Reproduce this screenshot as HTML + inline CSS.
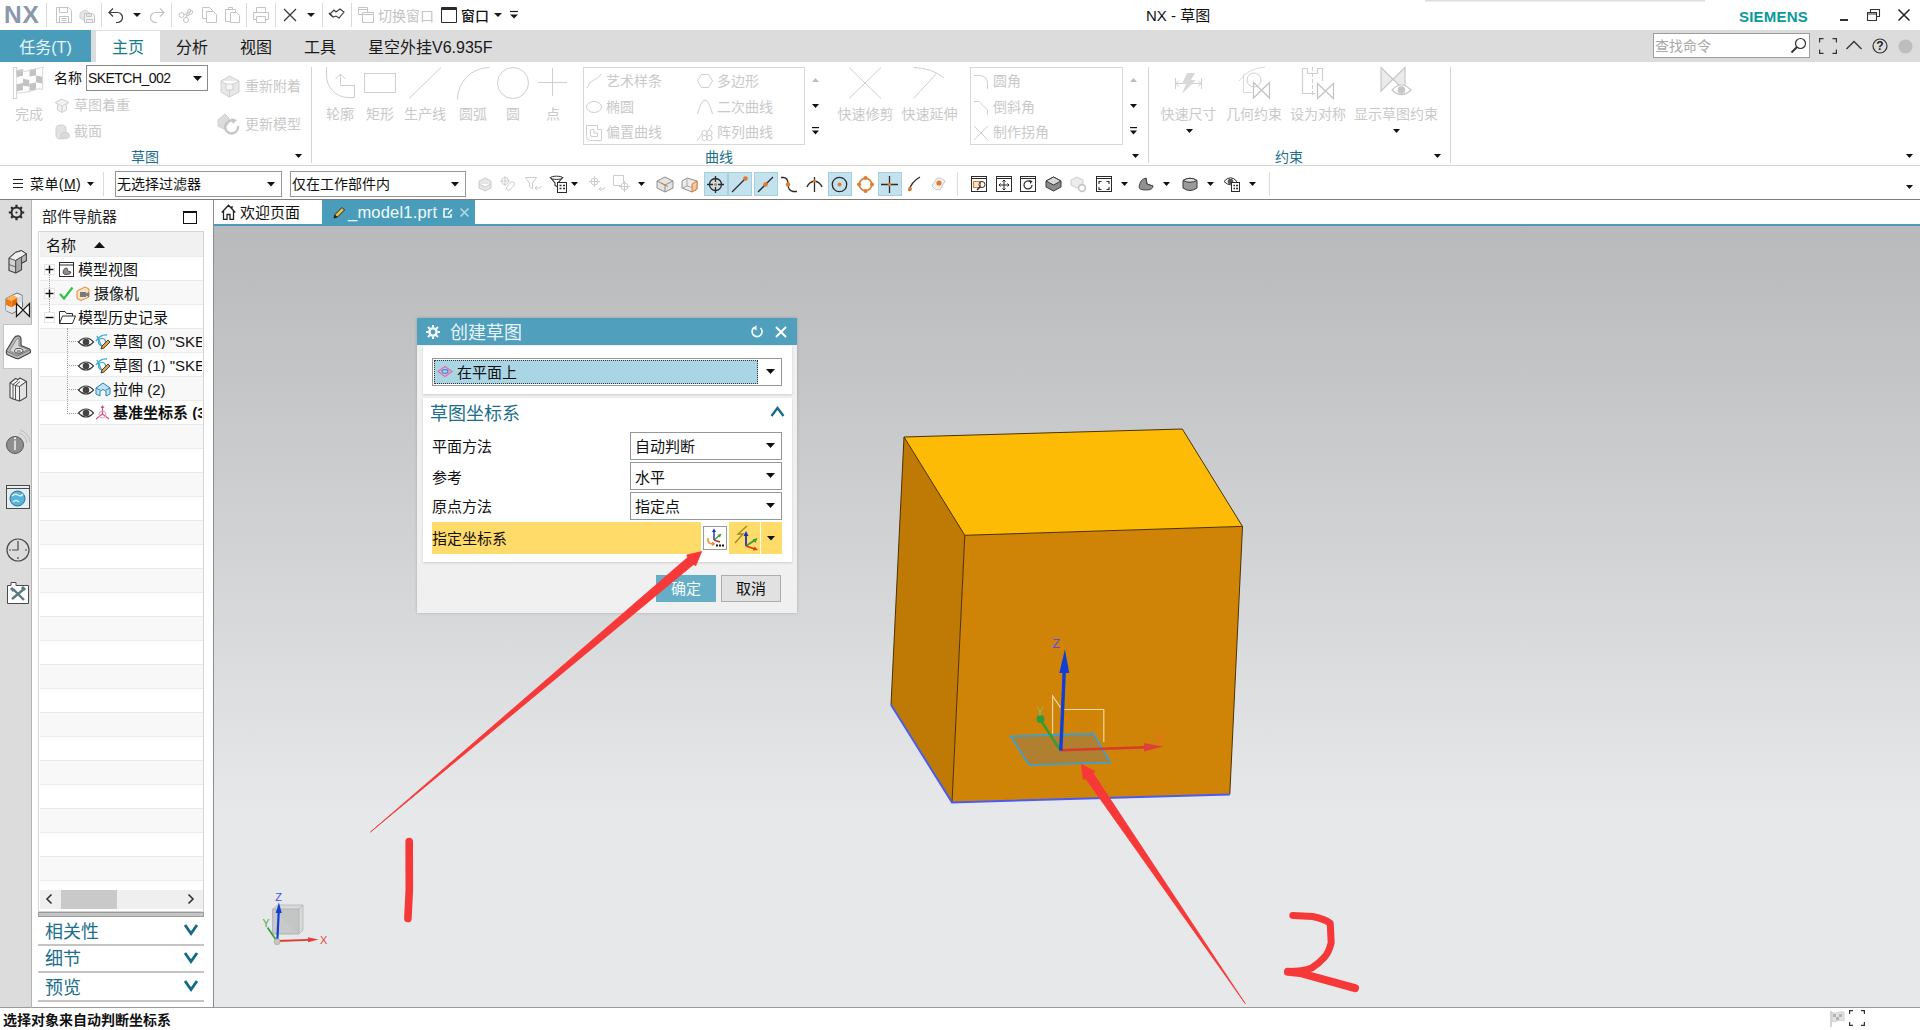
<!DOCTYPE html>
<html lang="zh-CN">
<head>
<meta charset="utf-8">
<title>NX - 草图</title>
<style>
*{box-sizing:border-box;margin:0;padding:0}
html,body{width:1920px;height:1030px;overflow:hidden;background:#fff}
body{font-family:"Liberation Sans","Noto Sans CJK SC",sans-serif;font-size:14px;color:#1a1a1a;position:relative}
.a{position:absolute}
.t{position:absolute;white-space:nowrap;line-height:1}
.dis{color:#c9c9c9}
svg{position:absolute;overflow:visible}
#titlebar{left:0;top:0;width:1920px;height:30px;background:#fff}
#tabbar{left:0;top:30px;width:1920px;height:32px;background:#dcdcdc}
#ribbon{left:0;top:62px;width:1920px;height:104px;background:#fff;border-bottom:1px solid #d4d4d4}
#toolbar{left:0;top:167px;width:1920px;height:33px;background:#fff;border-bottom:1px solid #7d7d7d}
#resbar{left:0;top:200px;width:32px;height:808px;background:#dcdcdc}
#nav{left:32px;top:200px;width:181px;height:808px;background:#fff}
#view{left:214px;top:226px;width:1706px;height:781px;background:linear-gradient(#b8b9bb 0%,#e7e8ea 75%,#e7e8ea 100%)}
#status{left:0;top:1007px;width:1920px;height:23px;background:#fff;border-top:1px solid #9a9a9a}
</style>
</head>
<body>
<div class="a" id="titlebar"></div>
<div class="a" id="tabbar"></div>
<div class="a" id="ribbon"></div>
<div class="a" id="toolbar"></div>
<div class="a" id="resbar"></div>
<div class="a" id="nav"></div>
<div class="a" id="view"></div>
<div class="a" id="status"></div>
<div class="t" style="left:4px;top:3.2px;font-size:24.5px;color:#8a98ad;font-weight:700;letter-spacing:0.8px">NX</div>
<div class="a" style="left:46px;top:3px;width:1px;height:24px;background:#d9d9d9"></div>
<div class="a" style="left:101px;top:3px;width:1px;height:24px;background:#d9d9d9"></div>
<div class="a" style="left:171px;top:3px;width:1px;height:24px;background:#d9d9d9"></div>
<div class="a" style="left:246px;top:3px;width:1px;height:24px;background:#d9d9d9"></div>
<div class="a" style="left:275px;top:3px;width:1px;height:24px;background:#d9d9d9"></div>
<div class="a" style="left:322px;top:3px;width:1px;height:24px;background:#d9d9d9"></div>
<div class="a" style="left:351px;top:3px;width:1px;height:24px;background:#d9d9d9"></div>
<svg style="left:56px;top:7px" width="16" height="16" viewBox="0 0 16 16"><path d="M.5 .5H12.5L15.5 3.5V15.5H.5Z M3.5 .5V5.5H11.5V.5 M3.5 15.5V9.5H12.5V15.5 M5.5 11.5H10.5 M5.5 13.5H10.5" fill="none" stroke="#c4c4c4" stroke-width="1"/></svg>
<svg style="left:79px;top:7px" width="16" height="16" viewBox="0 0 16 16"><path d="M1 6L6 3L11 6V11L6 14L1 11Z" fill="#e4e4e4" stroke="#d0d0d0"/><path d="M5.5 6.5H13.5L15.5 8.5V15.5H5.5Z M7.5 6.5V9.5H12.5V6.5 M7.5 15.5V12.5H13.5V15.5" fill="#f4f4f4" stroke="#c4c4c4"/></svg>
<svg style="left:108px;top:7px" width="17" height="16" viewBox="0 0 17 16"><path d="M1 5.5H9.5A5 5 0 0 1 9.5 15.5H8 M5 1.5L1 5.5L5 9.5" fill="none" stroke="#3a3a3a" stroke-width="1.2"/></svg>
<svg style="left:132.5px;top:13.0px" width="8" height="4" viewBox="0 0 8 4"><path d="M0 0H8L4.0 4Z" fill="#1a1a1a"/></svg>
<svg style="left:148px;top:7px" width="17" height="16" viewBox="0 0 17 16"><path d="M16 5.5H7.5A5 5 0 0 0 7.5 15.5H9 M12 1.5L16 5.5L12 9.5" fill="none" stroke="#c4c4c4" stroke-width="1.2"/></svg>
<svg style="left:178px;top:7px" width="16" height="16" viewBox="0 0 16 16"><circle cx="3.5" cy="8" r="2.5" fill="none" stroke="#c4c4c4"/><circle cx="8" cy="13" r="2.5" fill="none" stroke="#c4c4c4"/><path d="M6 8L14 3.5Q15.5 5 14 6.5L9 9 M8 10.5L10 3Q12 1.5 13 3L10 9" fill="none" stroke="#c4c4c4"/></svg>
<svg style="left:201px;top:7px" width="16" height="16" viewBox="0 0 16 16"><path d="M1.5 .5H8.5L11.5 3.5V11.5H1.5Z" fill="#fff" stroke="#c4c4c4"/><path d="M5.5 4.5H12.5L15.5 7.5V15.5H5.5Z" fill="#fff" stroke="#c4c4c4"/></svg>
<svg style="left:224px;top:7px" width="16" height="16" viewBox="0 0 16 16"><path d="M1.5 2.5H11.5V14.5H1.5Z M4.5 2.5V.5H8.5V2.5" fill="#fff" stroke="#c4c4c4"/><path d="M6.5 5.5H12.5L15.5 8.5V15.5H6.5Z" fill="#fff" stroke="#c4c4c4"/></svg>
<svg style="left:253px;top:7px" width="16" height="16" viewBox="0 0 16 16"><path d="M3.5 5.5V.5H12.5V5.5 M3.5 12.5H.5V5.5H15.5V12.5H12.5 M3.5 9.5H12.5V15.5H3.5Z" fill="none" stroke="#c4c4c4"/></svg>
<svg style="left:283px;top:8px" width="14" height="14" viewBox="0 0 14 14"><path d="M1 1L13 13M13 1L1 13" stroke="#3a3a3a" stroke-width="1.3" fill="none"/></svg>
<svg style="left:306.5px;top:13.0px" width="8" height="4" viewBox="0 0 8 4"><path d="M0 0H8L4.0 4Z" fill="#1a1a1a"/></svg>
<svg style="left:328px;top:8px" width="18" height="13" viewBox="0 0 18 13"><path d="M2 6L6 2L8 4L12 1L16 4L11 10L8 8L5 9Z" fill="#fff" stroke="#3a3a3a" stroke-width="1.1"/><path d="M1 5L4 8" stroke="#3a3a3a" stroke-width="1.5"/></svg>
<svg style="left:358px;top:7px" width="16" height="16" viewBox="0 0 16 16"><path d="M.5 .5H9.5V7.5H.5Z M.5 2.5H9.5" fill="#fff" stroke="#c4c4c4"/><path d="M4.5 5.5H15.5V15.5H4.5Z M4.5 7.5H15.5" fill="#fff" stroke="#c4c4c4"/></svg>
<div class="t" style="left:378px;top:8.5px;font-size:14px;color:#c4c4c4;font-weight:400;">切换窗口</div>
<svg style="left:441px;top:7px" width="16" height="16" viewBox="0 0 16 16"><path d="M.5 .5H15.5V15.5H.5Z" fill="#fff" stroke="#2a2a2a"/><path d="M.5 2H15.5" stroke="#2a2a2a" stroke-width="2"/></svg>
<div class="t" style="left:461px;top:8.5px;font-size:14px;color:#111;font-weight:500;">窗口</div>
<svg style="left:493.5px;top:13.0px" width="8" height="4" viewBox="0 0 8 4"><path d="M0 0H8L4.0 4Z" fill="#1a1a1a"/></svg>
<svg style="left:510px;top:11px" width="8" height="8" viewBox="0 0 8 8"><path d="M0 .5H8" stroke="#1a1a1a" stroke-width="1.2"/><path d="M0 3.5H8L4 7.5Z" fill="#1a1a1a"/></svg>
<div class="t" style="left:1146px;top:8.0px;font-size:15px;color:#111;font-weight:400;">NX - 草图</div>
<div class="t" style="left:1739px;top:9.0px;font-size:15px;color:#0a9a9a;font-weight:700;letter-spacing:0.2px">SIEMENS</div>
<div class="a" style="left:1840px;top:19px;width:8px;height:2px;background:#333"></div>
<svg style="left:1867px;top:9px" width="13" height="12" viewBox="0 0 13 12"><path d="M3.5 3.5V.5H12.5V7.5H9.5 M.5 3.5H9.5V11.5H.5Z M.5 5H9.5" fill="none" stroke="#333" stroke-width="1.1"/></svg>
<svg style="left:1898px;top:9px" width="12" height="12" viewBox="0 0 12 12"><path d="M.5 .5L11.5 11.5M11.5 .5L.5 11.5" stroke="#222" stroke-width="1.5"/></svg>
<div class="a" style="left:1425px;top:0px;width:280px;height:2px;background:linear-gradient(#d8d8d8,#f4f4f4)"></div>
<div class="a" style="left:0px;top:30px;width:91px;height:32px;background:#4a9dba"></div>
<div class="a" style="left:96px;top:31px;width:64px;height:31px;background:#fff"></div>
<div class="t" style="left:-154.5px;width:400px;text-align:center;top:39.7px;font-size:16px;color:#e9f6fb;font-weight:400;">任务(T)</div>
<div class="t" style="left:-72px;width:400px;text-align:center;top:39.7px;font-size:16px;color:#167a8c;font-weight:400;">主页</div>
<div class="t" style="left:-8px;width:400px;text-align:center;top:39.7px;font-size:16px;color:#1a1a1a;font-weight:400;">分析</div>
<div class="t" style="left:56px;width:400px;text-align:center;top:39.7px;font-size:16px;color:#1a1a1a;font-weight:400;">视图</div>
<div class="t" style="left:120px;width:400px;text-align:center;top:39.7px;font-size:16px;color:#1a1a1a;font-weight:400;">工具</div>
<div class="t" style="left:368px;top:39.7px;font-size:16px;color:#1a1a1a;font-weight:400;">星空外挂V6.935F</div>
<div class="a" style="left:1653px;top:33px;width:157px;height:25px;background:#fff;border:1px solid #9c9c9c"></div>
<div class="t" style="left:1655px;top:39.0px;font-size:14px;color:#a8a8a8;font-weight:400;">查找命令</div>
<svg style="left:1790px;top:37px" width="17" height="17" viewBox="0 0 17 17"><circle cx="10.5" cy="6.5" r="5" fill="none" stroke="#333" stroke-width="1.2"/><path d="M7 10L1.5 15.5" stroke="#333" stroke-width="2"/></svg>
<svg style="left:1819px;top:38px" width="18" height="16" viewBox="0 0 18 16"><path d="M.6 4.5V.6H4.5 M13.5 .6H17.4V4.5 M17.4 11.5V15.4H13.5 M4.5 15.4H.6V11.5" fill="none" stroke="#333" stroke-width="1.2"/></svg>
<svg style="left:1846px;top:40px" width="16" height="10" viewBox="0 0 16 10"><path d="M.5 9L8 1.5L15.5 9" fill="none" stroke="#333" stroke-width="1.3"/></svg>
<svg style="left:1872px;top:38px" width="16" height="16" viewBox="0 0 16 16"><circle cx="8" cy="8" r="7" fill="none" stroke="#333" stroke-width="1.2"/></svg><div class="t" style="left:1680px;width:400px;text-align:center;top:40.3px;font-size:12px;color:#222;font-weight:700;">?</div>
<svg style="left:1898px;top:39px" width="15" height="15" viewBox="0 0 15 15"><circle cx="7.5" cy="7.5" r="7" fill="#bdbdbd"/></svg>
<svg style="left:12px;top:65.5px" width="32" height="34" viewBox="0 0 32 34"><rect x="1.4" y="1.5" width="3.300" height="31" fill="#fff" stroke="#cdcdcd" stroke-width=".9"/><path d="M4.7 4.3L11.2 3.1V10.1L4.7 11.3Z" fill="#c3c3c3"/><path d="M4.7 11.3L11.2 10.1V17.1L4.7 18.3Z" fill="#fdfdfd"/><path d="M4.7 18.3L11.2 17.1V24.1L4.7 25.3Z" fill="#c3c3c3"/><path d="M11 5.8L17.5 7.0V14.0L11 12.8Z" fill="#fdfdfd"/><path d="M11 12.8L17.5 14.0V21.0L11 19.8Z" fill="#c3c3c3"/><path d="M11 19.8L17.5 21.0V28.0L11 26.8Z" fill="#fdfdfd"/><path d="M17.5 3.8L24.0 2.6V9.6L17.5 10.8Z" fill="#c3c3c3"/><path d="M17.5 10.8L24.0 9.6V16.6L17.5 17.8Z" fill="#fdfdfd"/><path d="M17.5 17.8L24.0 16.6V23.6L17.5 24.8Z" fill="#c3c3c3"/><path d="M24 2.6L30.5 3.8V10.8L24 9.6Z" fill="#fdfdfd"/><path d="M24 9.6L30.5 10.8V17.8L24 16.6Z" fill="#c3c3c3"/><path d="M24 16.6L30.5 17.8V24.8L24 23.6Z" fill="#fdfdfd"/><path d="M4.700 4.300Q9 5.500 11.500 5.500T24 2.800T30.700 2.200V23.500Q27 22 24 23.500T11.500 26.500T4.700 25.300" fill="none" stroke="#d2d2d2" stroke-width=".9"/></svg>
<div class="t" style="left:-171px;width:400px;text-align:center;top:106.7px;font-size:14px;color:#c9c9c9;font-weight:400;">完成</div>
<div class="t" style="left:54px;top:70.7px;font-size:14px;color:#111;font-weight:400;">名称</div>
<div class="a" style="left:86px;top:65px;width:122px;height:26px;background:#fff;border:1px solid #8a8a8a"></div>
<div class="t" style="left:88px;top:70.7px;font-size:14px;color:#111;font-weight:400;letter-spacing:-0.55px">SKETCH_002</div>
<svg style="left:192.5px;top:75.5px" width="9" height="5" viewBox="0 0 9 5"><path d="M0 0H9L4.5 5Z" fill="#111"/></svg>
<svg style="left:54px;top:98px" width="16" height="15" viewBox="0 0 16 15"><path d="M8 1L15 4.5L8 8L1 4.5Z M3.5 6.5V12L8 14.5L12.5 12V6.5 M8 8V14" fill="#f1f1f1" stroke="#cfcfcf"/></svg>
<div class="t" style="left:74px;top:97.7px;font-size:14px;color:#c9c9c9;font-weight:400;">草图着重</div>
<svg style="left:54px;top:124px" width="16" height="16" viewBox="0 0 16 16"><path d="M2 5Q2 1 7 1T12 5V11Q12 15 7 15T2 11Z" fill="#e2e2e2" stroke="#cfcfcf"/><ellipse cx="11" cy="11.5" rx="4.5" ry="3" fill="#dadada" stroke="#cfcfcf"/></svg>
<div class="t" style="left:74px;top:124.2px;font-size:14px;color:#c9c9c9;font-weight:400;">截面</div>
<svg style="left:218px;top:75px" width="23" height="24" viewBox="0 0 23 24"><path d="M11.5 1L21 6V17L11.5 22L3 17V6Z M3 6L11.5 11L21 6 M11.5 11V22" fill="#e8e8e8" stroke="#cfcfcf"/><path d="M8 9V15H15V9Z" fill="#f6f6f6" stroke="#cfcfcf"/></svg>
<div class="t" style="left:245px;top:79.2px;font-size:14px;color:#c9c9c9;font-weight:400;">重新附着</div>
<svg style="left:216px;top:112px" width="25" height="24" viewBox="0 0 25 24"><path d="M2 8L9 2L13 6V11L8 17L2 14Z" fill="#dcdcdc" stroke="#cfcfcf"/><path d="M22 14A6.5 6.5 0 1 1 18 9" fill="none" stroke="#c6c6c6" stroke-width="2.4"/><path d="M15 6L21 8L17 12Z" fill="#c6c6c6"/></svg>
<div class="t" style="left:245px;top:116.7px;font-size:14px;color:#c9c9c9;font-weight:400;">更新模型</div>
<div class="t" style="left:-55px;width:400px;text-align:center;top:149.7px;font-size:14px;color:#1b6f8c;font-weight:400;">草图</div>
<svg style="left:295.0px;top:154.0px" width="7" height="4" viewBox="0 0 7 4"><path d="M0 0H7L3.5 4Z" fill="#111"/></svg>
<div class="a" style="left:311px;top:67px;width:1px;height:96px;background:#d4d4d4"></div>
<svg style="left:326px;top:67px" width="29" height="32" viewBox="0 0 29 32"><path d="M.5 0V8A22 22 0 0 0 22 30.5H28.5V18.5H14.5V7.5 M9.5 12L14.5 7L19.5 12" fill="none" stroke="#cfcfcf"/></svg>
<div class="t" style="left:140px;width:400px;text-align:center;top:106.7px;font-size:14px;color:#c9c9c9;font-weight:400;">轮廓</div>
<div class="a" style="left:364px;top:73px;width:32px;height:20px;border:1px solid #cfcfcf"></div>
<div class="t" style="left:180px;width:400px;text-align:center;top:106.7px;font-size:14px;color:#c9c9c9;font-weight:400;">矩形</div>
<svg style="left:408px;top:66px" width="34" height="34" viewBox="0 0 34 34"><path d="M1 32.5L33 1.5" stroke="#cfcfcf" fill="none"/></svg>
<div class="t" style="left:225px;width:400px;text-align:center;top:106.7px;font-size:14px;color:#c9c9c9;font-weight:400;">生产线</div>
<svg style="left:457px;top:67px" width="33" height="33" viewBox="0 0 33 33"><path d="M.5 32.5A32 32 0 0 1 32.5 .5" stroke="#cfcfcf" fill="none"/></svg>
<div class="t" style="left:273px;width:400px;text-align:center;top:106.7px;font-size:14px;color:#c9c9c9;font-weight:400;">圆弧</div>
<svg style="left:497px;top:67px" width="32" height="32" viewBox="0 0 32 32"><circle cx="16" cy="16" r="15.5" stroke="#cfcfcf" fill="none"/></svg>
<div class="t" style="left:313px;width:400px;text-align:center;top:106.7px;font-size:14px;color:#c9c9c9;font-weight:400;">圆</div>
<svg style="left:538px;top:68px" width="29" height="29" viewBox="0 0 29 29"><path d="M0 14.5H29 M14.5 0V28" stroke="#cfcfcf" fill="none"/></svg>
<div class="t" style="left:353px;width:400px;text-align:center;top:106.7px;font-size:14px;color:#c9c9c9;font-weight:400;">点</div>
<div class="a" style="left:583px;top:67px;width:222px;height:78px;border:1px solid #d8d8d8"></div>
<svg style="left:586px;top:73.0px" width="16" height="16" viewBox="0 0 16 16"><path d="M1 15Q3 9 8 7T15 1" fill="none" stroke="#cfcfcf"/></svg>
<div class="t" style="left:606px;top:73.7px;font-size:14px;color:#c9c9c9;font-weight:400;">艺术样条</div>
<svg style="left:586px;top:99.0px" width="16" height="16" viewBox="0 0 16 16"><ellipse cx="8" cy="8" rx="7.5" ry="5.5" fill="none" stroke="#cfcfcf"/></svg>
<div class="t" style="left:606px;top:99.7px;font-size:14px;color:#c9c9c9;font-weight:400;">椭圆</div>
<svg style="left:586px;top:124.5px" width="16" height="16" viewBox="0 0 16 16"><path d="M.5 .5H11.5V4.5H15.5V15.5H4.5Q.5 15.5 .5 11.5Z M4.5 4.5H8V8H11.5V11.5H6Q4.5 11.5 4.5 10Z" fill="none" stroke="#cfcfcf"/></svg>
<div class="t" style="left:606px;top:125.2px;font-size:14px;color:#c9c9c9;font-weight:400;">偏置曲线</div>
<svg style="left:697px;top:73.0px" width="16" height="16" viewBox="0 0 16 16"><path d="M4.5 1.5H11.5L15.5 8L11.5 14.5H4.5L.5 8Z" fill="none" stroke="#cfcfcf"/></svg>
<div class="t" style="left:717px;top:73.7px;font-size:14px;color:#c9c9c9;font-weight:400;">多边形</div>
<svg style="left:697px;top:99.0px" width="16" height="16" viewBox="0 0 16 16"><path d="M.5 15Q8 -13 15.5 15" fill="none" stroke="#cfcfcf"/></svg>
<div class="t" style="left:717px;top:99.7px;font-size:14px;color:#c9c9c9;font-weight:400;">二次曲线</div>
<svg style="left:697px;top:124.5px" width="16" height="16" viewBox="0 0 16 16"><path d="M0 16L5 9 M11 6L15 0" stroke="#cfcfcf" fill="none"/><circle cx="7.5" cy="8" r="2.6" fill="none" stroke="#cfcfcf"/><circle cx="12.5" cy="8" r="2.6" fill="none" stroke="#cfcfcf"/><circle cx="7.5" cy="13" r="2.6" fill="none" stroke="#cfcfcf"/><circle cx="12.5" cy="13" r="2.6" fill="none" stroke="#cfcfcf"/></svg>
<div class="t" style="left:717px;top:125.2px;font-size:14px;color:#c9c9c9;font-weight:400;">阵列曲线</div>
<svg style="left:812.0px;top:78px" width="7" height="4" viewBox="0 0 7 4"><path d="M0 4H7L3.5 0Z" fill="#bdbdbd"/></svg><svg style="left:812.0px;top:104.0px" width="7" height="4" viewBox="0 0 7 4"><path d="M0 0H7L3.5 4Z" fill="#111"/></svg><svg style="left:812.0px;top:127px" width="7" height="8" viewBox="0 0 7 8"><path d="M0 .6H7" stroke="#111" stroke-width="1.2"/><path d="M0 3.5H7L3.5 7.5Z" fill="#111"/></svg>
<svg style="left:848px;top:67px" width="34" height="32" viewBox="0 0 34 32"><path d="M1 .5L33 31.5 M33 .5L1 31.5" stroke="#cfcfcf" fill="none"/></svg>
<div class="t" style="left:665.5px;width:400px;text-align:center;top:106.7px;font-size:14px;color:#c9c9c9;font-weight:400;">快速修剪</div>
<svg style="left:912px;top:66px" width="34" height="34" viewBox="0 0 34 34"><path d="M1.5 1.5Q20 2 32 12 M1.5 32.5L24.5 7.5" stroke="#cfcfcf" fill="none"/></svg>
<div class="t" style="left:729.5px;width:400px;text-align:center;top:106.7px;font-size:14px;color:#c9c9c9;font-weight:400;">快速延伸</div>
<div class="a" style="left:970px;top:67px;width:153px;height:78px;border:1px solid #d8d8d8"></div>
<svg style="left:973px;top:73.0px" width="16" height="16" viewBox="0 0 16 16"><path d="M1 2.5H6Q14.5 2.5 14.5 11V16" fill="none" stroke="#cfcfcf"/></svg>
<div class="t" style="left:993px;top:73.7px;font-size:14px;color:#c9c9c9;font-weight:400;">圆角</div>
<svg style="left:973px;top:99.0px" width="16" height="16" viewBox="0 0 16 16"><path d="M1 2.5H6L14.5 11V16" fill="none" stroke="#cfcfcf"/></svg>
<div class="t" style="left:993px;top:99.7px;font-size:14px;color:#c9c9c9;font-weight:400;">倒斜角</div>
<svg style="left:973px;top:124.5px" width="16" height="16" viewBox="0 0 16 16"><path d="M1 1L15 15 M15 1L1 15" fill="none" stroke="#cfcfcf"/></svg>
<div class="t" style="left:993px;top:125.2px;font-size:14px;color:#c9c9c9;font-weight:400;">制作拐角</div>
<svg style="left:1130.0px;top:78px" width="7" height="4" viewBox="0 0 7 4"><path d="M0 4H7L3.5 0Z" fill="#bdbdbd"/></svg><svg style="left:1130.0px;top:104.0px" width="7" height="4" viewBox="0 0 7 4"><path d="M0 0H7L3.5 4Z" fill="#111"/></svg><svg style="left:1130.0px;top:127px" width="7" height="8" viewBox="0 0 7 8"><path d="M0 .6H7" stroke="#111" stroke-width="1.2"/><path d="M0 3.5H7L3.5 7.5Z" fill="#111"/></svg>
<div class="t" style="left:519px;width:400px;text-align:center;top:149.7px;font-size:14px;color:#1b6f8c;font-weight:400;">曲线</div>
<svg style="left:1131.5px;top:154.0px" width="7" height="4" viewBox="0 0 7 4"><path d="M0 0H7L3.5 4Z" fill="#111"/></svg>
<div class="a" style="left:1148px;top:67px;width:1px;height:96px;background:#d4d4d4"></div>
<svg style="left:1174px;top:70px" width="30" height="28" viewBox="0 0 30 28"><path d="M1.5 8V19 M27.5 8V19 M2 13.5H27 M5 10.5L2 13.5L5 16.5 M24 10.5L27 13.5L24 16.5" fill="none" stroke="#cfcfcf"/><path d="M13 3H21L17 10H22L8 24L12 14H8Z" fill="#d9d9d9"/></svg>
<div class="t" style="left:988.5px;width:400px;text-align:center;top:106.7px;font-size:14px;color:#c9c9c9;font-weight:400;">快速尺寸</div>
<svg style="left:1186.0px;top:129.0px" width="7" height="4" viewBox="0 0 7 4"><path d="M0 0H7L3.5 4Z" fill="#111"/></svg>
<svg style="left:1238px;top:66px" width="33" height="33" viewBox="0 0 33 33"><path d="M1 15Q10 2 27 1 M5.5 8V26.5H14" fill="none" stroke="#dadada"/><circle cx="16" cy="14" r="7" fill="none" stroke="#cfcfcf"/><path d="M15.5 16.5V32L31.5 16.5V32Z" fill="none" stroke="#c2c2c2" stroke-width="1.2"/></svg>
<div class="t" style="left:1054px;width:400px;text-align:center;top:106.7px;font-size:14px;color:#c9c9c9;font-weight:400;">几何约束</div>
<svg style="left:1301px;top:67px" width="34" height="33" viewBox="0 0 34 33"><path d="M1.5 1.5H6.5V6.5H16.5V1.5H21.5V14 M1.5 1.5V26.5H14.5" fill="none" stroke="#cfcfcf" stroke-width="1.2"/><path d="M11.5 0V28" stroke="#cfcfcf" stroke-dasharray="4 2"/><path d="M16.5 16.5V31.5L32.5 16.5V31.5Z" fill="none" stroke="#c2c2c2" stroke-width="1.2"/></svg>
<div class="t" style="left:1118px;width:400px;text-align:center;top:106.7px;font-size:14px;color:#c9c9c9;font-weight:400;">设为对称</div>
<svg style="left:1380px;top:66px" width="33" height="33" viewBox="0 0 33 33"><path d="M1 1.5V25L25 1.5V25Z" fill="#ebebeb" stroke="#c9c9c9" stroke-width="1.2"/><path d="M12 24Q21.5 14 31 24Q21.5 33 12 24Z" fill="#fff" stroke="#c4c4c4" stroke-width="1.2"/><circle cx="21.5" cy="24" r="3.8" fill="#c6c6c6"/></svg>
<div class="t" style="left:1196px;width:400px;text-align:center;top:106.7px;font-size:14px;color:#c9c9c9;font-weight:400;">显示草图约束</div>
<svg style="left:1393.0px;top:129.0px" width="7" height="4" viewBox="0 0 7 4"><path d="M0 0H7L3.5 4Z" fill="#111"/></svg>
<div class="t" style="left:1089px;width:400px;text-align:center;top:149.7px;font-size:14px;color:#1b6f8c;font-weight:400;">约束</div>
<svg style="left:1434.0px;top:154.0px" width="7" height="4" viewBox="0 0 7 4"><path d="M0 0H7L3.5 4Z" fill="#111"/></svg>
<div class="a" style="left:1450px;top:67px;width:1px;height:96px;background:#d4d4d4"></div>
<svg style="left:1905.5px;top:154.0px" width="7" height="4" viewBox="0 0 7 4"><path d="M0 0H7L3.5 4Z" fill="#111"/></svg>
<svg style="left:13px;top:179px" width="10" height="10" viewBox="0 0 10 10"><path d="M0 .5H10 M0 4.5H10 M0 8.5H10" stroke="#222" stroke-width="1.1"/></svg>
<div class="t" style="left:30px;top:176.8px;font-size:14px;color:#111;font-weight:400;letter-spacing:0.4px">菜单(<u>M</u>)</div>
<svg style="left:87.0px;top:182.0px" width="7" height="4" viewBox="0 0 7 4"><path d="M0 0H7L3.5 4Z" fill="#111"/></svg>
<div class="a" style="left:103px;top:172px;width:1px;height:24px;background:#dcdcdc"></div>
<div class="a" style="left:115px;top:171px;width:167px;height:26px;background:#fff;border:1px solid #949494"></div>
<div class="t" style="left:117px;top:176.9px;font-size:14px;color:#111;font-weight:400;">无选择过滤器</div>
<svg style="left:267.0px;top:182.25px" width="8" height="4.5" viewBox="0 0 8 4.5"><path d="M0 0H8L4.0 4.5Z" fill="#111"/></svg>
<div class="a" style="left:290px;top:171px;width:176px;height:26px;background:#fff;border:1px solid #949494"></div>
<div class="t" style="left:292px;top:176.9px;font-size:14px;color:#111;font-weight:400;">仅在工作部件内</div>
<svg style="left:451.0px;top:182.25px" width="8" height="4.5" viewBox="0 0 8 4.5"><path d="M0 0H8L4.0 4.5Z" fill="#111"/></svg>
<svg style="left:477px;top:176.0px" width="16" height="16" viewBox="0 0 16 16"><path d="M2 5L8 2L14 5V8L8 11L2 8Z M2 8V12L8 15L14 12V8" fill="#e6e6e6" stroke="#cdcdcd"/></svg>
<svg style="left:500px;top:176.0px" width="16" height="16" viewBox="0 0 16 16"><circle cx="5" cy="5" r="3.5" fill="none" stroke="#cdcdcd"/><path d="M5 0V10M0 5H10" stroke="#cdcdcd"/><path d="M6 12L11 6Q14 5 15 8L10 14Q7 15 6 12Z" fill="none" stroke="#cdcdcd"/></svg>
<svg style="left:525px;top:176.0px" width="17" height="16" viewBox="0 0 17 16"><path d="M.5 1.5H11.5L7.5 7V13L4.5 11V7Z" fill="none" stroke="#cdcdcd"/><path d="M10 12H14Q16 12 16 10 M12 10L10 12L12 14" fill="none" stroke="#cdcdcd"/></svg>
<svg style="left:550px;top:175.5px" width="17" height="17" viewBox="0 0 17 17"><path d="M.5 1.5H12.5L8 7V11L5 9.5V7Z" fill="#fff" stroke="#2b2b2b" stroke-width="1.1"/><ellipse cx="6.5" cy="1.8" rx="6" ry="1.6" fill="#fff" stroke="#2b2b2b"/><rect x="7.5" y="6.5" width="9" height="10" fill="#fff" stroke="#2b2b2b"/><path d="M9.5 9.5H11.5M13 9.5H15M9.5 12.5H11.5M13 12.5H15" stroke="#2b2b2b" stroke-width="1.4"/></svg>
<svg style="left:571.0px;top:182.0px" width="7" height="4" viewBox="0 0 7 4"><path d="M0 0H7L3.5 4Z" fill="#111"/></svg>
<svg style="left:589px;top:176.0px" width="17" height="16" viewBox="0 0 17 16"><circle cx="5.5" cy="5.5" r="3.5" fill="none" stroke="#cdcdcd"/><path d="M5.5 0V11M0 5.5H11" stroke="#cdcdcd"/><path d="M10 13H14Q16 13 16 11 M12 11L10 13L12 15" fill="none" stroke="#cdcdcd"/></svg>
<svg style="left:613px;top:175.0px" width="18" height="18" viewBox="0 0 18 18"><path d="M.5 .5H10.5V10.5H.5Z" fill="none" stroke="#cdcdcd"/><circle cx="11.5" cy="11.5" r="3.5" fill="#fff" stroke="#cdcdcd"/><path d="M11.5 6V17M6 11.5H17" stroke="#cdcdcd"/></svg>
<svg style="left:638.0px;top:182.0px" width="7" height="4" viewBox="0 0 7 4"><path d="M0 0H7L3.5 4Z" fill="#111"/></svg>
<svg style="left:656px;top:175.5px" width="18" height="17" viewBox="0 0 18 17"><path d="M1 5L9 1L17 5V12L9 16L1 12Z" fill="#e4e4e4" stroke="#8e8e8e"/><path d="M1 5L9 9L17 5M9 9V16" fill="none" stroke="#8e8e8e"/><path d="M5 7L12 10.5" stroke="#e07a2f"/></svg>
<svg style="left:681px;top:175.5px" width="17" height="17" viewBox="0 0 17 17"><path d="M1 5L6 2L16 5V13L11 16L1 12Z" fill="#ececec" stroke="#8e8e8e"/><path d="M6 2V10L1 12M6 10L16 13" fill="none" stroke="#aaa"/><path d="M11 8V16L16 13V5Z" fill="#f2c9a8" stroke="#e07a2f"/></svg>
<div class="a" style="left:704px;top:172px;width:24px;height:24px;background:#c4e2ee;border:1px solid #a6d0e0"></div>
<div class="a" style="left:728px;top:172px;width:24px;height:24px;background:#c4e2ee;border:1px solid #a6d0e0"></div>
<div class="a" style="left:754px;top:172px;width:24px;height:24px;background:#c4e2ee;border:1px solid #a6d0e0"></div>
<div class="a" style="left:828px;top:172px;width:24px;height:24px;background:#c4e2ee;border:1px solid #a6d0e0"></div>
<div class="a" style="left:878px;top:172px;width:24px;height:24px;background:#c4e2ee;border:1px solid #a6d0e0"></div>
<svg style="left:707px;top:175.5px" width="17" height="17" viewBox="0 0 17 17"><circle cx="8.5" cy="8.5" r="6" fill="none" stroke="#2b2b2b" stroke-width="1.3"/><path d="M8.5 0V6M8.5 11V17M0 8.5H6M11 8.5H17" stroke="#2b2b2b" stroke-width="1.3"/><circle cx="8.5" cy="8.5" r="1.6" fill="#e07a2f"/></svg>
<svg style="left:731px;top:175.5px" width="17" height="17" viewBox="0 0 17 17"><path d="M1 16L15 2" stroke="#2b2b2b" stroke-width="1.3"/><circle cx="14.5" cy="2.5" r="2.3" fill="#e07a2f"/></svg>
<svg style="left:757px;top:175.5px" width="17" height="17" viewBox="0 0 17 17"><path d="M1 16L16 1" stroke="#2b2b2b" stroke-width="1.3"/><circle cx="8.5" cy="8.5" r="2.3" fill="#e07a2f"/></svg>
<svg style="left:781px;top:175.5px" width="17" height="17" viewBox="0 0 17 17"><path d="M0 1.5H2Q7 1.5 7 8T12 15.5H16" fill="none" stroke="#2b2b2b" stroke-width="1.3"/><circle cx="7" cy="8.5" r="2.2" fill="#e07a2f"/></svg>
<svg style="left:806px;top:175.5px" width="17" height="17" viewBox="0 0 17 17"><path d="M8.5 1V16 M1 11Q3 6 8.5 5Q14 6 16 11" fill="none" stroke="#2b2b2b" stroke-width="1.3"/><circle cx="8.5" cy="5" r="1.6" fill="#e07a2f"/></svg>
<svg style="left:831px;top:175.5px" width="17" height="17" viewBox="0 0 17 17"><circle cx="8.5" cy="8.5" r="7.2" fill="none" stroke="#2b2b2b" stroke-width="1.3"/><circle cx="8.5" cy="8.5" r="2" fill="#e07a2f"/></svg>
<svg style="left:857px;top:175.5px" width="17" height="17" viewBox="0 0 17 17"><circle cx="8.5" cy="8.5" r="6.2" fill="none" stroke="#e07a2f" stroke-width="1.6"/><circle cx="8.5" cy="2" r="2" fill="#e07a2f"/><circle cx="8.5" cy="15" r="2" fill="#e07a2f"/><circle cx="2" cy="8.5" r="2" fill="#e07a2f"/><circle cx="15" cy="8.5" r="2" fill="#e07a2f"/></svg>
<svg style="left:881px;top:175.5px" width="17" height="17" viewBox="0 0 17 17"><path d="M8.5 0V17M0 8.5H17" stroke="#2b2b2b" stroke-width="1.3"/><circle cx="8.5" cy="8.5" r="1.8" fill="#e07a2f"/></svg>
<svg style="left:907px;top:175.5px" width="15" height="17" viewBox="0 0 15 17"><path d="M2 15Q4 6 13 1" fill="none" stroke="#2b2b2b" stroke-width="1.4"/><circle cx="3" cy="13" r="2" fill="#e07a2f"/></svg>
<svg style="left:931px;top:176.5px" width="15" height="15" viewBox="0 0 15 15"><path d="M1 9L6 1Q11 0 14 4L9 13Q4 14 1 9Z" fill="#f3f3f3" stroke="#c9c9c9"/><circle cx="8" cy="6" r="2.6" fill="#e07a2f"/></svg>
<div class="a" style="left:957px;top:172px;width:1px;height:24px;background:#dcdcdc"></div>
<svg style="left:971px;top:176.0px" width="16" height="16" viewBox="0 0 16 16"><rect x=".5" y=".5" width="15" height="15" fill="#fff" stroke="#2b2b2b"/><path d="M.5 2.5H15.5" stroke="#2b2b2b"/><rect x="2.5" y="5.5" width="7" height="6" fill="#fbe3cf" stroke="#e07a2f"/><circle cx="11" cy="8.5" r="3" fill="none" stroke="#2b2b2b"/><path d="M9 11L6 14" stroke="#2b2b2b" stroke-width="1.4"/></svg>
<svg style="left:996px;top:176.0px" width="16" height="16" viewBox="0 0 16 16"><rect x=".5" y=".5" width="15" height="15" fill="#fff" stroke="#2b2b2b"/><path d="M.5 2.5H15.5" stroke="#2b2b2b"/><path d="M8 4V14M3 9H13 M6.5 5.5L8 4L9.5 5.5 M6.5 12.5L8 14L9.5 12.5 M4.5 7.5L3 9L4.5 10.5 M11.5 7.5L13 9L11.5 10.5" fill="none" stroke="#2b2b2b"/></svg>
<svg style="left:1020px;top:176.0px" width="16" height="16" viewBox="0 0 16 16"><rect x=".5" y=".5" width="15" height="15" fill="#fff" stroke="#2b2b2b"/><path d="M.5 2.5H15.5" stroke="#2b2b2b"/><path d="M12 9A4 4 0 1 1 10 5.5" fill="none" stroke="#2b2b2b" stroke-width="1.2"/><path d="M9 4L12.5 5L10.5 8Z" fill="#2b2b2b"/></svg>
<svg style="left:1045px;top:176.0px" width="17" height="16" viewBox="0 0 17 16"><path d="M1 5L8.5 1L16 5V11L8.5 15L1 11Z" fill="#8b8b8b" stroke="#3a3a3a"/><path d="M1 5L8.5 9L16 5L8.5 1Z" fill="#d9d9d9" stroke="#3a3a3a"/></svg>
<svg style="left:1070px;top:175.5px" width="17" height="17" viewBox="0 0 17 17"><path d="M1 4L7 1L13 4V9L7 12L1 9Z" fill="#ececec" stroke="#cdcdcd"/><circle cx="12" cy="12" r="3.4" fill="#fff" stroke="#c4c4c4" stroke-width="1.6"/></svg>
<svg style="left:1096px;top:176.0px" width="16" height="16" viewBox="0 0 16 16"><rect x=".5" y=".5" width="15" height="15" fill="#fff" stroke="#2b2b2b"/><path d="M.5 2.5H15.5" stroke="#2b2b2b"/><path d="M3 8V5.5H5.5 M10.5 5.5H13V8 M13 11V13.5H10.5 M5.5 13.5H3V11" fill="none" stroke="#2b2b2b" stroke-width="1.1"/></svg>
<svg style="left:1121.0px;top:182.0px" width="7" height="4" viewBox="0 0 7 4"><path d="M0 0H7L3.5 4Z" fill="#111"/></svg>
<svg style="left:1138px;top:176.0px" width="16" height="16" viewBox="0 0 16 16"><path d="M1 11Q2 3 8 2L9 8L15 10Q15 14 8 14T1 11Z" fill="#8f8f8f" stroke="#4a4a4a"/><path d="M8 2L9 8L15 10" fill="none" stroke="#4a4a4a"/></svg>
<svg style="left:1163.0px;top:182.0px" width="7" height="4" viewBox="0 0 7 4"><path d="M0 0H7L3.5 4Z" fill="#111"/></svg>
<svg style="left:1182px;top:176.0px" width="16" height="16" viewBox="0 0 16 16"><path d="M1 4.5Q8 0 15 4.5V12Q8 17 1 12Z" fill="#9a9a9a" stroke="#3a3a3a"/><path d="M1 4.5Q8 8 15 4.5Q8 0 1 4.5Z" fill="#dedede" stroke="#3a3a3a"/></svg>
<svg style="left:1207.0px;top:182.0px" width="7" height="4" viewBox="0 0 7 4"><path d="M0 0H7L3.5 4Z" fill="#111"/></svg>
<svg style="left:1224px;top:175.5px" width="17" height="17" viewBox="0 0 17 17"><path d="M0 5.5Q6.5 -2 13 5.5Q6.5 12 0 5.5Z" fill="#fff" stroke="#2b2b2b"/><circle cx="6.5" cy="5.5" r="2.8" fill="#555"/><rect x="7.5" y="6.5" width="8" height="9" fill="#fff" stroke="#2b2b2b"/><path d="M9.5 9.5H11M12 9.5H14M9.5 12.5H11M12 12.5H14" stroke="#2b2b2b" stroke-width="1.3"/></svg>
<svg style="left:1249.0px;top:182.0px" width="7" height="4" viewBox="0 0 7 4"><path d="M0 0H7L3.5 4Z" fill="#111"/></svg>
<div class="a" style="left:1269px;top:172px;width:1px;height:24px;background:#dcdcdc"></div>
<svg style="left:1905.5px;top:185.0px" width="7" height="4" viewBox="0 0 7 4"><path d="M0 0H7L3.5 4Z" fill="#111"/></svg>
<!--RESBAR-->
<div class="a" style="left:31px;top:200px;width:1px;height:808px;background:#b4b4b4"></div>
<div class="a" style="left:3px;top:324px;width:29px;height:45px;background:#fff;border:1px solid #c4c4c4;border-right:none"></div>
<svg style="left:8px;top:204px" width="17" height="17" viewBox="0 0 17 17"><circle cx="8.5" cy="8.5" r="5" fill="none" stroke="#2b2b2b" stroke-width="2"/><circle cx="8.5" cy="8.5" r="1.1" fill="#2b2b2b"/><path d="M8.5 .8V3.300M8.500 13.700V16.200M.8 8.500H3.300M13.700 8.500H16.200M3.100 3.100L4.800 4.800M12.200 12.200L13.900 13.900M3.100 13.900L4.800 12.200M12.200 4.800L13.900 3.100" stroke="#2b2b2b" stroke-width="2.200"/></svg>
<svg style="left:8px;top:249px" width="20" height="25" viewBox="0 0 20 25"><path d="M7.700 3.400L13.500 1.700L18.400 5V11.600L13.500 14.100V20.700L7.700 24L1 21.500V9.200Z" fill="#d2d2d2" stroke="#454545" stroke-width="1.200" stroke-linejoin="round"/><path d="M1 9.200L7.700 3.400L13.500 1.700L18.400 5L13.500 8L7.700 11.500Z" fill="#efefef" stroke="#454545" stroke-width=".9" stroke-linejoin="round"/><path d="M7.700 11.500V24M13.500 8V14.100M1 15.500L7.700 18M7.700 18L13.500 14.100" fill="none" stroke="#5a5a5a" stroke-width=".9"/><path d="M7.700 11.500L13.500 8V20.700L7.700 24Z" fill="#a9a9a9" stroke="#454545" stroke-width=".9" stroke-linejoin="round"/><path d="M13.500 8L18.400 5V11.600L13.500 14.100Z" fill="#b5b5b5" stroke="#454545" stroke-width=".9" stroke-linejoin="round"/></svg>
<svg style="left:5px;top:292px" width="26" height="26" viewBox="0 0 26 26"><path d="M1 6.500L8 3L12 1L17.500 3.500V15L11 19.500L7 21.500L1 18.500Z" fill="#f2f2f2" stroke="#5b6f85" stroke-width="1" stroke-linejoin="round"/><path d="M1 6.500L8 3L12.500 5.500L6.500 9Z" fill="#ffb35c"/><path d="M1 6.500L6.500 9V15.500L1 13Z" fill="#f07a12"/><path d="M6.500 9L12.500 5.500V12L6.500 15.500Z" fill="#e8690a"/><path d="M1 13L6.500 15.500L12.500 12V16.500L7 21L1 18.500Z" fill="#e4e4e4"/><path d="M12.500 5.500L17.500 3.500V10L12.500 12Z" fill="#d9d9d9"/><path d="M11.500 11.500V24.500L24.500 11.500V24.500Z" fill="#fff" stroke="#1c1c1c" stroke-width="1.300" stroke-linejoin="miter"/></svg>
<svg style="left:5px;top:334px" width="27" height="26" viewBox="0 0 27 26"><path d="M1.500 16.500L9 4Q11 1.200 14.500 2.200Q16 3 16 5V11.500L24.500 15Q26 16 25.500 18.500L14 24.500Q12 25 10 24L2 20.500Q.8 19 1.500 16.500Z" fill="#b9b9b9" stroke="#454545" stroke-width="1.200" stroke-linejoin="round"/><path d="M4.500 17L11.500 5.500Q12.500 4 14 4.500V12L23 15.500L13 20.500Z" fill="#d6d6d6" stroke="#6a6a6a" stroke-width=".7"/><path d="M2 17.500L12.500 22L25 16" fill="none" stroke="#6a6a6a" stroke-width=".8"/><ellipse cx="13.800" cy="16.800" rx="4.200" ry="2.300" fill="#efefef" stroke="#454545" stroke-width="1"/><ellipse cx="13.800" cy="17.300" rx="2.400" ry="1.200" fill="#9a9a9a"/></svg>
<svg style="left:9px;top:376px" width="19" height="26" viewBox="0 0 19 26"><path d="M1 7L6.500 2.500L9 3.500L11 2L17.500 5.500V21L10.500 25L4 23L1 21.500Z" fill="#f1f1f1" stroke="#454545" stroke-width="1.100" stroke-linejoin="round"/><path d="M1 7L4 8.500V23M4 8.500L9 4.500M6.500 9.500V24M6.500 9.500L11 5.500M6.500 9.500L4 8.500M10.500 10.500V25M10.500 10.500L17.500 5.500M10.500 10.500L6.500 9.500" fill="none" stroke="#454545" stroke-width=".9"/><path d="M10.500 10.500L17.500 5.500V21L10.500 25Z" fill="#e2e2e2" stroke="#454545" stroke-width=".9"/></svg>
<svg style="left:5px;top:430px" width="26" height="25" viewBox="0 0 26 25"><circle cx="10" cy="15" r="8.5" fill="#8e8e8e" stroke="#5a5a5a"/><path d="M10 10.500V20" stroke="#f2f2f2" stroke-width="1.500"/><circle cx="10" cy="8.2" r="1" fill="#fff"/><path d="M14 3Q21 5 22 13 M15 0Q24 3 25 12" fill="none" stroke="#bdbdbd"/></svg>
<svg style="left:6px;top:485px" width="24" height="24" viewBox="0 0 24 24"><rect x=".5" y=".5" width="23" height="23" fill="#e4eef4" stroke="#4a4a4a"/><path d="M.5 3.5H23.5" stroke="#4a4a4a"/><circle cx="11.5" cy="13.5" r="7.5" fill="#58b3d8" stroke="#2a6f95"/><path d="M6 11Q9 8 12 10T17 9M7 17Q10 14 13 17" fill="none" stroke="#d9f0fa" stroke-width="1.5"/></svg>
<svg style="left:6px;top:538px" width="24" height="24" viewBox="0 0 24 24"><circle cx="12" cy="12" r="11" fill="none" stroke="#4a4a4a" stroke-width="1.2"/><path d="M12 3V12H6 M12 19V21 M19 12H21 M3 12H5" fill="none" stroke="#4a4a4a" stroke-width="1.2"/></svg>
<svg style="left:7px;top:581px" width="23" height="24" viewBox="0 0 23 24"><path d="M.5 4.5H4V1.5H9V4.5H21.5V22.5H.5Z" fill="#fff" stroke="#4a4a4a"/><path d="M5 18L17 8 M6 8L17 19" stroke="#5c7a80" stroke-width="2.4"/><path d="M4 7L7 10M15 6L18 9" stroke="#5c7a80" stroke-width="3"/></svg>
<div class="t" style="left:42px;top:209.0px;font-size:15px;color:#222;font-weight:400;">部件导航器</div>
<div class="a" style="left:183px;top:211px;width:14px;height:13px;border:1.5px solid #111;border-top-width:2px"></div>
<div class="a" style="left:38px;top:231px;width:166px;height:681px;border:1px solid #d4d4d4;background:#fff"></div>
<div class="a" style="left:40px;top:232px;width:163px;height:24px;background:#f1f1f1"></div>
<div class="t" style="left:46px;top:238.0px;font-size:15px;color:#111;font-weight:400;">名称</div>
<svg style="left:94px;top:242px" width="11" height="6" viewBox="0 0 11 6"><path d="M0 6H11L5.500 0Z" fill="#111"/></svg>
<div class="a" style="left:40px;top:256px;width:163px;height:24px;background:#fff;border-top:1px solid #ebebeb"></div>
<div class="a" style="left:40px;top:280px;width:163px;height:24px;background:#f8f8f8;border-top:1px solid #ebebeb"></div>
<div class="a" style="left:40px;top:304px;width:163px;height:24px;background:#fff;border-top:1px solid #ebebeb"></div>
<div class="a" style="left:40px;top:328px;width:163px;height:24px;background:#f8f8f8;border-top:1px solid #ebebeb"></div>
<div class="a" style="left:40px;top:352px;width:163px;height:24px;background:#fff;border-top:1px solid #ebebeb"></div>
<div class="a" style="left:40px;top:376px;width:163px;height:24px;background:#f8f8f8;border-top:1px solid #ebebeb"></div>
<div class="a" style="left:40px;top:400px;width:163px;height:24px;background:#fff;border-top:1px solid #ebebeb"></div>
<div class="a" style="left:40px;top:424px;width:163px;height:24px;background:#f8f8f8;border-top:1px solid #ebebeb"></div>
<div class="a" style="left:40px;top:448px;width:163px;height:24px;background:#fff;border-top:1px solid #ebebeb"></div>
<div class="a" style="left:40px;top:472px;width:163px;height:24px;background:#f8f8f8;border-top:1px solid #ebebeb"></div>
<div class="a" style="left:40px;top:496px;width:163px;height:24px;background:#fff;border-top:1px solid #ebebeb"></div>
<div class="a" style="left:40px;top:520px;width:163px;height:24px;background:#f8f8f8;border-top:1px solid #ebebeb"></div>
<div class="a" style="left:40px;top:544px;width:163px;height:24px;background:#fff;border-top:1px solid #ebebeb"></div>
<div class="a" style="left:40px;top:568px;width:163px;height:24px;background:#f8f8f8;border-top:1px solid #ebebeb"></div>
<div class="a" style="left:40px;top:592px;width:163px;height:24px;background:#fff;border-top:1px solid #ebebeb"></div>
<div class="a" style="left:40px;top:616px;width:163px;height:24px;background:#f8f8f8;border-top:1px solid #ebebeb"></div>
<div class="a" style="left:40px;top:640px;width:163px;height:24px;background:#fff;border-top:1px solid #ebebeb"></div>
<div class="a" style="left:40px;top:664px;width:163px;height:24px;background:#f8f8f8;border-top:1px solid #ebebeb"></div>
<div class="a" style="left:40px;top:688px;width:163px;height:24px;background:#fff;border-top:1px solid #ebebeb"></div>
<div class="a" style="left:40px;top:712px;width:163px;height:24px;background:#f8f8f8;border-top:1px solid #ebebeb"></div>
<div class="a" style="left:40px;top:736px;width:163px;height:24px;background:#fff;border-top:1px solid #ebebeb"></div>
<div class="a" style="left:40px;top:760px;width:163px;height:24px;background:#f8f8f8;border-top:1px solid #ebebeb"></div>
<div class="a" style="left:40px;top:784px;width:163px;height:24px;background:#fff;border-top:1px solid #ebebeb"></div>
<div class="a" style="left:40px;top:808px;width:163px;height:24px;background:#f8f8f8;border-top:1px solid #ebebeb"></div>
<div class="a" style="left:40px;top:832px;width:163px;height:24px;background:#fff;border-top:1px solid #ebebeb"></div>
<div class="a" style="left:40px;top:856px;width:163px;height:24px;background:#f8f8f8;border-top:1px solid #ebebeb"></div>
<div class="a" style="left:40px;top:880px;width:163px;height:24px;background:#fff;border-top:1px solid #ebebeb"></div>
<div class="a" style="left:49px;top:274px;width:1px;height:40px;border-left:1px dotted #9a9a9a"></div>
<div class="a" style="left:67px;top:328px;width:1px;height:86px;border-left:1px dotted #9a9a9a"></div>
<div class="a" style="left:67px;top:341px;width:11px;height:1px;border-top:1px dotted #9a9a9a"></div>
<div class="a" style="left:67px;top:365px;width:11px;height:1px;border-top:1px dotted #9a9a9a"></div>
<div class="a" style="left:67px;top:389px;width:11px;height:1px;border-top:1px dotted #9a9a9a"></div>
<div class="a" style="left:67px;top:413px;width:11px;height:1px;border-top:1px dotted #9a9a9a"></div>
<svg style="left:44px;top:264px" width="11" height="11" viewBox="0 0 11 11"><rect x=".5" y=".5" width="10" height="10" fill="#fff" stroke="#e6e6e6"/><path d="M1.500 5.500H9.500" stroke="#111" stroke-width="1.400"/><path d="M5.500 1.500V9.500" stroke="#111" stroke-width="1.400"/></svg>
<svg style="left:44px;top:288px" width="11" height="11" viewBox="0 0 11 11"><rect x=".5" y=".5" width="10" height="10" fill="#fff" stroke="#e6e6e6"/><path d="M1.500 5.500H9.500" stroke="#111" stroke-width="1.400"/><path d="M5.500 1.500V9.500" stroke="#111" stroke-width="1.400"/></svg>
<svg style="left:44px;top:312px" width="11" height="11" viewBox="0 0 11 11"><rect x=".5" y=".5" width="10" height="10" fill="#fff" stroke="#e6e6e6"/><path d="M1.500 5.500H9.500" stroke="#111" stroke-width="1.400"/></svg>
<svg style="left:59px;top:262px" width="16" height="15" viewBox="0 0 16 15"><rect x=".5" y=".5" width="14" height="14" fill="#fff" stroke="#2b2b2b"/><path d="M.5 3H14.5" stroke="#2b2b2b"/><path d="M4 11Q4 6 8 6L9 9L12 10Q12 12.5 8 12.5T4 11Z" fill="#8f8f8f" stroke="#444" stroke-width=".8"/></svg>
<div class="t" style="left:78px;top:261.8px;font-size:15px;color:#111;font-weight:400;">模型视图</div>
<svg style="left:59px;top:286px" width="15" height="14" viewBox="0 0 15 14"><path d="M1 8L5 12.5L13.500 1.5" fill="none" stroke="#2fc24a" stroke-width="2.2"/></svg>
<svg style="left:76px;top:286px" width="15" height="15" viewBox="0 0 15 15"><path d="M1 5L9 1L13 3V11L5 14.5L1 12.5Z" fill="#fbe1c6" stroke="#e48a2e"/><rect x="4" y="6" width="6" height="5" fill="#7a7a7a"/><path d="M10 7.5L13 6V11L10 9.500Z" fill="#7a7a7a"/></svg>
<div class="t" style="left:94px;top:285.8px;font-size:15px;color:#111;font-weight:400;">摄像机</div>
<svg style="left:59px;top:310px" width="17" height="14" viewBox="0 0 17 14"><path d="M.5 13.500V1.500H6L7.500 3.500H13.500V6 M.5 13.500L3.500 6H16.500L13.500 13.500Z" fill="#fff" stroke="#2b2b2b"/></svg>
<div class="t" style="left:78px;top:309.8px;font-size:15px;color:#111;font-weight:400;">模型历史记录</div>
<svg style="left:78px;top:336.5px" width="16" height="10" viewBox="0 0 16 10"><path d="M.5 5Q8 -3 15.500 5Q8 13 .5 5Z" fill="#fff" stroke="#333" stroke-width="1.1"/><circle cx="8" cy="5" r="3.3" fill="#444"/></svg>
<svg style="left:95px;top:333.5px" width="16" height="16" viewBox="0 0 16 16"><path d="M2 2L7 13 M1 7Q6 0 12 1" fill="none" stroke="#3aa7d6" stroke-width="1.3"/><circle cx="7" cy="8" r="3.5" fill="none" stroke="#3aa7d6" stroke-width="1.2"/><path d="M6 15L7 12L13 6L15 8L9 14Z" fill="#e9a23b" stroke="#333" stroke-width=".9"/></svg>
<svg style="left:78px;top:360.5px" width="16" height="10" viewBox="0 0 16 10"><path d="M.5 5Q8 -3 15.500 5Q8 13 .5 5Z" fill="#fff" stroke="#333" stroke-width="1.1"/><circle cx="8" cy="5" r="3.3" fill="#444"/></svg>
<svg style="left:95px;top:357.5px" width="16" height="16" viewBox="0 0 16 16"><path d="M2 2L7 13 M1 7Q6 0 12 1" fill="none" stroke="#3aa7d6" stroke-width="1.3"/><circle cx="7" cy="8" r="3.5" fill="none" stroke="#3aa7d6" stroke-width="1.2"/><path d="M6 15L7 12L13 6L15 8L9 14Z" fill="#e9a23b" stroke="#333" stroke-width=".9"/></svg>
<div class="t" style="left:113px;top:333.7px;font-size:15px;color:#111;font-weight:400;width:89px;overflow:hidden">草图 (0) "SKE</div>
<div class="t" style="left:113px;top:357.7px;font-size:15px;color:#111;font-weight:400;width:89px;overflow:hidden">草图 (1) "SKE</div>
<svg style="left:78px;top:384.5px" width="16" height="10" viewBox="0 0 16 10"><path d="M.5 5Q8 -3 15.500 5Q8 13 .5 5Z" fill="#fff" stroke="#333" stroke-width="1.1"/><circle cx="8" cy="5" r="3.3" fill="#444"/></svg>
<svg style="left:95px;top:382px" width="16" height="15" viewBox="0 0 16 15"><path d="M1 6L8 1L15 6V12L11 14V9Q8 6 5 9V14L1 12Z" fill="#bfe3f3" stroke="#2a84b5"/><path d="M1 6L5 8M15 6L11 8" stroke="#2a84b5" fill="none"/></svg>
<div class="t" style="left:113px;top:381.7px;font-size:15px;color:#111;font-weight:400;">拉伸 (2)</div>
<svg style="left:78px;top:408px" width="16" height="10" viewBox="0 0 16 10"><path d="M.5 5Q8 -3 15.500 5Q8 13 .5 5Z" fill="#fff" stroke="#333" stroke-width="1.1"/><circle cx="8" cy="5" r="3.3" fill="#444"/></svg>
<svg style="left:95px;top:405px" width="15" height="15" viewBox="0 0 15 15"><path d="M7.500 1V9L1 14M7.500 9L14 14" fill="none" stroke="#d4567a" stroke-width="1.2"/><path d="M7.500 0L5.500 3H9.500Z" fill="#d4567a"/><circle cx="7.500" cy="9.500" r="3.500" fill="none" stroke="#e59ab0"/></svg>
<div class="t" style="left:113px;top:405.2px;font-size:15px;color:#111;font-weight:700;width:89px;overflow:hidden">基准坐标系 (3</div>
<div class="a" style="left:40px;top:890px;width:163px;height:19px;background:#efefef"></div>
<div class="a" style="left:61px;top:890px;width:56px;height:19px;background:#c9c9c9"></div>
<svg style="left:46px;top:894px" width="6" height="10" viewBox="0 0 6 10"><path d="M5.500 .5L1 5L5.500 9.500" fill="none" stroke="#333" stroke-width="1.6"/></svg>
<svg style="left:188px;top:894px" width="6" height="10" viewBox="0 0 6 10"><path d="M.5 .5L5 5L.5 9.500" fill="none" stroke="#333" stroke-width="1.6"/></svg>
<div class="a" style="left:38px;top:912px;width:166px;height:5px;background:#c6c6c6;border:1px solid #9c9c9c"></div>
<div class="t" style="left:45px;top:922.5px;font-size:18px;color:#1b6f8c;font-weight:400;">相关性</div>
<svg style="left:184px;top:924.0px" width="14" height="11" viewBox="0 0 14 11"><path d="M1 1L7 9.500L13 1" fill="none" stroke="#146b87" stroke-width="2.800"/></svg>
<div class="a" style="left:38px;top:943.5px;width:166px;height:2px;background:#c4c4c4"></div>
<div class="t" style="left:45px;top:950.0px;font-size:18px;color:#1b6f8c;font-weight:400;">细节</div>
<svg style="left:184px;top:951.5px" width="14" height="11" viewBox="0 0 14 11"><path d="M1 1L7 9.500L13 1" fill="none" stroke="#146b87" stroke-width="2.800"/></svg>
<div class="a" style="left:38px;top:971px;width:166px;height:2px;background:#c4c4c4"></div>
<div class="t" style="left:45px;top:978.5px;font-size:18px;color:#1b6f8c;font-weight:400;">预览</div>
<svg style="left:184px;top:980.0px" width="14" height="11" viewBox="0 0 14 11"><path d="M1 1L7 9.500L13 1" fill="none" stroke="#146b87" stroke-width="2.800"/></svg>
<div class="a" style="left:38px;top:999.5px;width:166px;height:2px;background:#c4c4c4"></div>
<div class="a" style="left:214px;top:200px;width:1706px;height:24px;background:#fff"></div>
<div class="a" style="left:213px;top:200px;width:1px;height:808px;background:#8c8c8c"></div>
<div class="a" style="left:214px;top:224px;width:1706px;height:2px;background:#4a9dba"></div>
<div class="a" style="left:322px;top:200px;width:153px;height:25px;background:#4a9dba"></div>
<svg style="left:221px;top:204px" width="15" height="16" viewBox="0 0 15 16"><path d="M.7 8.500L7.500 1.200L14.300 8.500 M2.500 7V15.300H6V10.500H9V15.300H12.500V7 M11 2V5" fill="none" stroke="#222" stroke-width="1.3"/></svg>
<div class="t" style="left:240px;top:205.0px;font-size:15px;color:#111;font-weight:400;">欢迎页面</div>
<svg style="left:333px;top:206px" width="12" height="13" viewBox="0 0 12 13"><path d="M1 12L2 8.500L9 1.500L11.500 4L4.500 11Z" fill="#e8c04a" stroke="#222" stroke-width="1"/><path d="M1 12L2 8.500L4.500 11Z" fill="#222"/></svg>
<div class="t" style="left:348px;top:204.2px;font-size:16.5px;color:#f2fafd;font-weight:400;letter-spacing:0.2px">_model1.prt</div>
<svg style="left:443px;top:208px" width="10" height="10" viewBox="0 0 10 10"><path d="M6 1H1V9H8V6" fill="none" stroke="#f2fafd" stroke-width="1.6"/><path d="M5 6L9 1.500" stroke="#f2fafd" stroke-width="1.6"/></svg>
<svg style="left:460px;top:208px" width="9" height="9" viewBox="0 0 9 9"><path d="M.5 .5L8.500 8.500M8.500 .5L.5 8.500" stroke="#b5d6e3" stroke-width="1.6"/></svg>
<svg style="left:0;top:0" width="1920" height="1030" viewBox="0 0 1920 1030"><polygon points="904.0,437.0 1182.3,429.0 1242.5,526.4 964.8,535.3" fill="#fdbb05"/><polygon points="904.0,437.0 964.8,535.3 952.0,802.4 891.0,704.8" fill="#bf7a06"/><polygon points="964.8,535.3 1242.5,526.4 1229.8,794.4 952.0,802.4" fill="#d08407"/><path d="M904.0,437.0L1182.3,429.0L1242.5,526.4L964.8,535.3Z M904.0,437.0L891.0,704.8 M964.8,535.3L952.0,802.4 M1242.5,526.4L1229.8,794.4" fill="none" stroke="#4a3205" stroke-width="1"/><path d="M891.0,704.8L952.0,802.4L1229.8,794.4" fill="none" stroke="#4a5cf0" stroke-width="2"/><path d="M1052.6 733.6V696L1060.4 707.4 M1062 709.5H1103.8V742" fill="none" stroke="#f3dcae" stroke-width="1.1"/><polygon points="1010.6,736.3 1093.6,733.6 1110.2,762.5 1029,765" fill="rgba(120,120,120,0.36)" stroke="#2fa3e6" stroke-width="1.6"/><path d="M1060.4 750.2L1040.5 720" stroke="#3c9a35" stroke-width="2.6"/><circle cx="1040.5" cy="719" r="4" fill="#2f9a3a"/><path d="M1037 707L1040 712L1043.500 706.500 M1040 712V716" stroke="#7fc46a" stroke-width="1" fill="none"/><path d="M1060.4 750.2L1146 747.2" stroke="#d93a30" stroke-width="2.6"/><polygon points="1144,743 1163,746.600 1144,751.500" fill="#e04038"/><text x="1155.500" y="742.500" font-size="12" fill="#ef6a2a" font-family="Liberation Sans, sans-serif">X</text><path d="M1060.8 750.500L1064.300 670" stroke="#0f3fd6" stroke-width="3.4"/><polygon points="1059.300,673 1064.900,649.500 1069.200,673" fill="#0f3fd6"/><text x="1052.500" y="648" font-size="12.500" fill="#5a49ee" font-family="Liberation Sans, sans-serif">Z</text><polygon points="272.600,909 299,909 299,934 272.600,934" fill="rgba(175,175,175,0.55)" stroke="#a9a9a9" stroke-width=".8"/><path d="M272.600 909L278 905H303V930L299 934 M303 905L299 909" fill="rgba(190,190,190,0.35)" stroke="#b4b4b4" stroke-width=".8"/><path d="M277.100 941.600L267.500 927.500" stroke="#3ea03a" stroke-width="1.8"/><path d="M277.100 941L309 939.900" stroke="#dd3c33" stroke-width="1.8"/><polygon points="308,937.300 318.500,939.600 308,942.300" fill="#e0423a"/><path d="M277.300 941L278.700 912" stroke="#0f3fd6" stroke-width="2.2"/><polygon points="275.700,913 278.900,902.500 281.700,913" fill="#0f3fd6"/><circle cx="277.100" cy="941.800" r="3" fill="#c9c5bd" stroke="#a5a19a" stroke-width=".6"/><text x="275.300" y="900.500" font-size="11" fill="#3f4fe6" font-family="Liberation Sans, sans-serif">Z</text><text x="320" y="943.800" font-size="11" fill="#e24a40" font-family="Liberation Sans, sans-serif">X</text><text x="262.500" y="926.500" font-size="10.500" fill="#4aa845" font-family="Liberation Sans, sans-serif">Y</text></svg>
<div class="a" style="left:417px;top:318px;width:380px;height:295px;background:#f0f0f0;box-shadow:0 0 3px rgba(0,0,0,0.18)"></div>
<div class="a" style="left:417px;top:318px;width:380px;height:27px;background:#4f9fbd"></div>
<svg style="left:426px;top:325px" width="14" height="14" viewBox="0 0 14 14"><circle cx="7" cy="7" r="3.600" fill="none" stroke="#f4fbfe" stroke-width="2.400"/><path d="M7 0V2.500M7 11.500V14M0 7H2.500M11.500 7H14M2 2L3.800 3.800M10.200 10.200L12 12M2 12L3.800 10.200M10.200 3.800L12 2" stroke="#f4fbfe" stroke-width="2"/></svg>
<div class="t" style="left:450px;top:324.0px;font-size:18px;color:#e9f5fa;font-weight:400;">创建草图</div>
<svg style="left:750px;top:325px" width="14" height="14" viewBox="0 0 14 14"><path d="M10.500 3A5 5 0 1 1 4 2.700" fill="none" stroke="#f4fbfe" stroke-width="1.700"/><path d="M6.500 .2V5.500L2.500 3Z" fill="#f4fbfe"/></svg>
<svg style="left:775px;top:326px" width="12" height="12" viewBox="0 0 12 12"><path d="M1 1L11 11M11 1L1 11" stroke="#fff" stroke-width="2"/></svg>
<div class="a" style="left:423px;top:346px;width:369px;height:48px;background:#fff;box-shadow:0 1px 2px rgba(0,0,0,0.15)"></div>
<div class="a" style="left:432px;top:358px;width:350px;height:28px;background:#fff;border:1px solid #969696"></div>
<div class="a" style="left:434px;top:360px;width:324px;height:24px;background:#a9d5e5;border:1px dotted #333"></div>
<svg style="left:437px;top:365px" width="16" height="13" viewBox="0 0 16 13"><path d="M8 1.500L15 6.500L8 11.500L1 6.500Z" fill="none" stroke="#e86aa0" stroke-width="1.200"/><ellipse cx="8" cy="6.500" rx="3" ry="1.800" fill="none" stroke="#5a7be0" stroke-width="1.200"/></svg>
<div class="t" style="left:457px;top:365.0px;font-size:15px;color:#111;font-weight:400;">在平面上</div>
<svg style="left:766.0px;top:369.0px" width="9" height="5" viewBox="0 0 9 5"><path d="M0 0H9L4.5 5Z" fill="#111"/></svg>
<div class="a" style="left:423px;top:398px;width:369px;height:164px;background:#fff;box-shadow:0 1px 2px rgba(0,0,0,0.15)"></div>
<div class="t" style="left:430px;top:405.0px;font-size:18px;color:#1b6f8c;font-weight:400;">草图坐标系</div>
<svg style="left:770px;top:406px" width="15" height="11" viewBox="0 0 15 11"><path d="M1.500 10L7.500 2L13.500 10" fill="none" stroke="#146b87" stroke-width="2.300"/></svg>
<div class="t" style="left:432px;top:439.0px;font-size:15px;color:#111;font-weight:400;">平面方法</div>
<div class="a" style="left:630px;top:432px;width:152px;height:28px;background:#fff;border:1px solid #969696"></div>
<div class="t" style="left:635px;top:439.0px;font-size:15px;color:#111;font-weight:400;">自动判断</div>
<svg style="left:766.0px;top:443.0px" width="9" height="5" viewBox="0 0 9 5"><path d="M0 0H9L4.5 5Z" fill="#111"/></svg>
<div class="t" style="left:432px;top:469.5px;font-size:15px;color:#111;font-weight:400;">参考</div>
<div class="a" style="left:630px;top:462px;width:152px;height:28px;background:#fff;border:1px solid #969696"></div>
<div class="t" style="left:635px;top:469.5px;font-size:15px;color:#111;font-weight:400;">水平</div>
<svg style="left:766.0px;top:473.0px" width="9" height="5" viewBox="0 0 9 5"><path d="M0 0H9L4.5 5Z" fill="#111"/></svg>
<div class="t" style="left:432px;top:499.0px;font-size:15px;color:#111;font-weight:400;">原点方法</div>
<div class="a" style="left:630px;top:492px;width:152px;height:28px;background:#fff;border:1px solid #969696"></div>
<div class="t" style="left:635px;top:499.0px;font-size:15px;color:#111;font-weight:400;">指定点</div>
<svg style="left:766.0px;top:503.0px" width="9" height="5" viewBox="0 0 9 5"><path d="M0 0H9L4.5 5Z" fill="#111"/></svg>
<div class="a" style="left:432px;top:522px;width:269px;height:32px;background:#ffdc6a"></div>
<div class="t" style="left:432px;top:531.0px;font-size:15px;color:#111;font-weight:400;">指定坐标系</div>
<div class="a" style="left:703px;top:526px;width:24px;height:24px;background:#fff;border:1px solid #9a9a9a"></div>
<svg style="left:705px;top:528px" width="20" height="20" viewBox="0 0 20 20"><path d="M9 12V2" stroke="#1a2fc0" stroke-width="1.400"/><path d="M9 .5L7 4H11Z" fill="#1a2fc0"/><path d="M9 12L15 7" stroke="#3c9a35" stroke-width="1.400"/><path d="M16.500 5.500L12.500 7L15 9.500Z" fill="#3c9a35"/><path d="M9 12L15 14" stroke="#b03030" stroke-width="1.400"/><path d="M3 10Q2 16 8 16" fill="none" stroke="#ef8a2a" stroke-width="1.500"/><path d="M7 13.500L10.500 16L7 18Z" fill="#ef8a2a"/><path d="M11 17.500H13M14 17.500H16M17 17.500H19" stroke="#111" stroke-width="1.800"/></svg>
<div class="a" style="left:729px;top:522px;width:31px;height:32px;background:#ffdc6a"></div>
<div class="a" style="left:761px;top:522px;width:21px;height:32px;background:#ffdc6a"></div>
<svg style="left:732px;top:524px" width="26" height="28" viewBox="0 0 26 28"><path d="M15 2L6 10H11L3 19" fill="none" stroke="#9a8a20" stroke-width="1.300"/><path d="M14 22V10" stroke="#1a2fc0" stroke-width="1.800"/><path d="M14 7L11.500 12H16.500Z" fill="#1a2fc0"/><path d="M14 22L23 16" stroke="#3c9a35" stroke-width="1.800"/><path d="M25.500 14L20.500 15.500L23.500 19Z" fill="#3c9a35"/><path d="M14 22L23 25" stroke="#d23a2a" stroke-width="1.800"/><path d="M26 26L21 26.500L22.500 22.500Z" fill="#d23a2a"/></svg>
<svg style="left:767.0px;top:536.25px" width="8" height="4.5" viewBox="0 0 8 4.5"><path d="M0 0H8L4.0 4.5Z" fill="#111"/></svg>
<div class="a" style="left:656px;top:575px;width:60px;height:27px;background:#66adc6"></div>
<div class="t" style="left:486px;width:400px;text-align:center;top:581.0px;font-size:15px;color:#f4fbfe;font-weight:400;">确定</div>
<div class="a" style="left:721px;top:575px;width:60px;height:27px;background:#e1e1e1;border:1px solid #adadad"></div>
<div class="t" style="left:551px;width:400px;text-align:center;top:581.0px;font-size:15px;color:#111;font-weight:400;">取消</div>
<svg style="left:0;top:0" width="1920" height="1030" viewBox="0 0 1920 1030"><polygon points="370.5,832.0 693.5,564.5 695.8,565.7 701.6,551.6 686.8,555.0 687.6,557.5" fill="#f63838" stroke="#f63838" stroke-width=".8" stroke-linejoin="round"/><polygon points="1245.3,1003.7 1093.4,773.6 1094.8,771.4 1081.4,764.2 1083.2,779.3 1085.8,778.8" fill="#f63838" stroke="#f63838" stroke-width=".8" stroke-linejoin="round"/><path d="M409.200 841.500L409.300 890L407.900 918.500" fill="none" stroke="#f63838" stroke-width="7.600" stroke-linecap="round" stroke-linejoin="round"/><path d="M1292.800 915.500L1312.700 916.500Q1325 919 1330.200 923.300L1331.200 942.700Q1329 952 1324.400 957.300Q1319 963.500 1311.700 968Q1302 971.500 1288 971.400" fill="none" stroke="#f63838" stroke-width="7" stroke-linecap="round" stroke-linejoin="round"/><path d="M1288 971.800L1300 973L1355 988.200" fill="none" stroke="#f63838" stroke-width="8" stroke-linecap="round" stroke-linejoin="round"/></svg>
<div class="t" style="left:3px;top:1012.5px;font-size:14px;color:#111;font-weight:700;">选择对象来自动判断坐标系</div>
<svg style="left:1830px;top:1011px" width="14" height="16" viewBox="0 0 14 16"><path d="M1 0V16" stroke="#bdbdbd" stroke-width="1.3"/><path d="M2 1.500Q6 3 9 1.500T14 1.500V10Q10 8.500 7 10T2 10Z" fill="#e3e3e3" stroke="#cfcfcf"/><path d="M3 3H6V6H3ZM9 3H12V6H9ZM6 6H9V9H6Z" fill="#b5b5b5"/></svg>
<svg style="left:1849px;top:1010px" width="16" height="16" viewBox="0 0 16 16"><path d="M.6 4V.6H4 M12 .6H15.400V4 M15.400 12V15.400H12 M4 15.400H.6V12" fill="none" stroke="#333" stroke-width="1.2"/></svg>
</body>
</html>
